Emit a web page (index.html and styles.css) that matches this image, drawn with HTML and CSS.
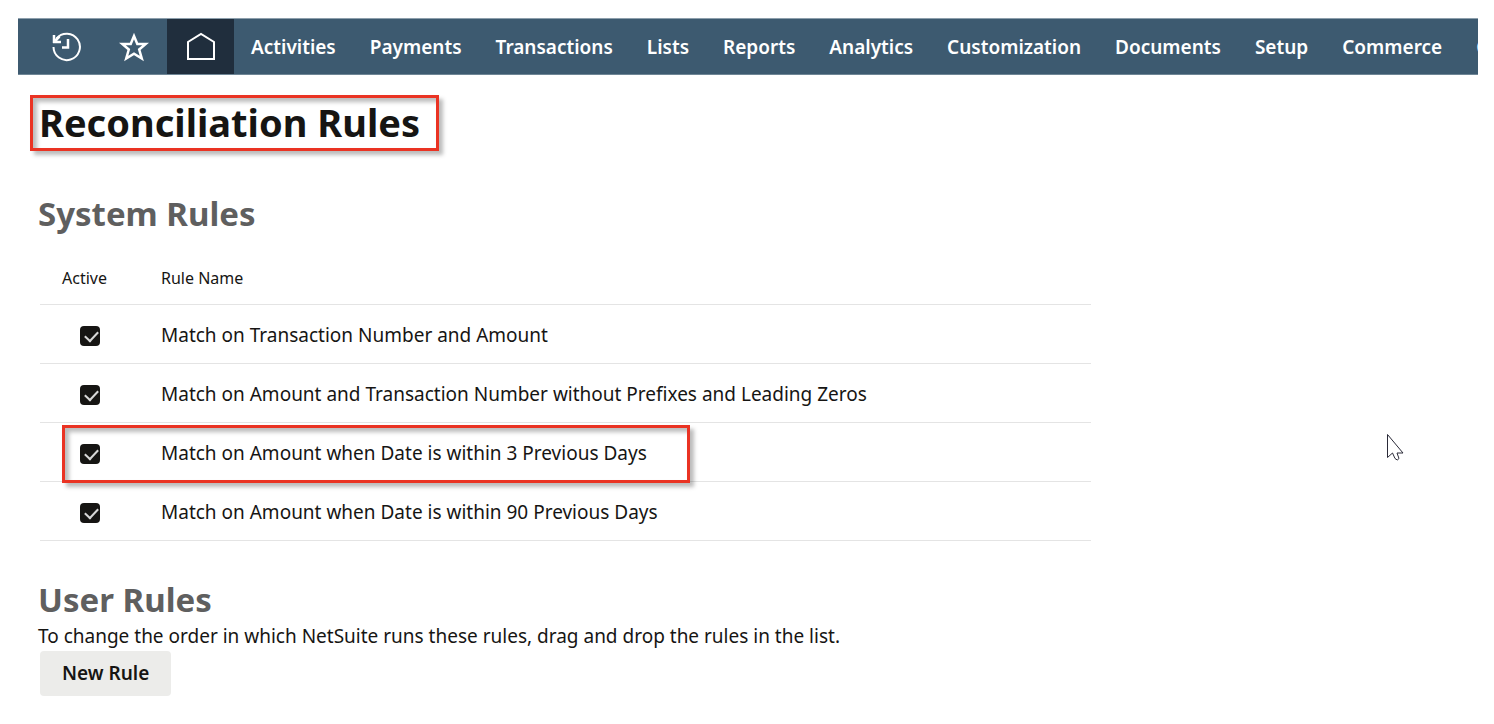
FILE: index.html
```html
<!DOCTYPE html>
<html lang="en">
	<head>
		<meta charset="utf-8">
		<link rel="stylesheet" href="styles.css">
		<title>Reconciliation Rules</title>
	</head>
	<body>
		<nav>
			<a class="icon" href="#" aria-label="Recent Records">
				<svg viewBox="0 0 30 30" width="30" height="30"><path d="M1.500 15a13.200 13.200 0 1 0 3-8.500"/><path d="M2 3v8M1 10h8M2.500 9.500l5-5M16 7v8.500h-6" stroke-width="2.500"/></svg>
			</a>
			<a class="icon" href="#" aria-label="Shortcuts">
				<svg viewBox="0 0 30 30" width="30" height="30"><path d="M15 4l3.300 8h8.400l-6.500 5.500 2.600 9-7.800-4.700-7.800 4.700 2.600-9L3.300 12h8.400z" stroke-width="2.500"/></svg>
			</a>
			<a class="icon current" href="#" aria-label="Home">
				<svg viewBox="0 0 30 30" width="30" height="30"><path d="M2 27V10L15 2l13 8v17z"/></svg>
			</a>
			<a href="#">Activities</a>
			<a href="#">Payments</a>
			<a href="#">Transactions</a>
			<a href="#">Lists</a>
			<a href="#">Reports</a>
			<a href="#">Analytics</a>
			<a href="#">Customization</a>
			<a href="#">Documents</a>
			<a href="#">Setup</a>
			<a href="#">Commerce</a>
			<a href="#">C</a>
		</nav>
		<main>
			<h1 class="marked">Reconciliation Rules</h1>
			<section>
				<h2>System Rules</h2>
				<table>
					<thead>
						<tr>
							<th class="active">Active</th>
							<th>Rule Name</th>
						</tr>
					</thead>
					<tbody>
						<tr>
							<td class="active"><input id="rule_number" type="checkbox" checked></td>
							<td><label for="rule_number">Match on Transaction Number and Amount</label></td>
						</tr>
						<tr>
							<td class="active"><input id="rule_prefix" type="checkbox" checked></td>
							<td><label for="rule_prefix">Match on Amount and Transaction Number without Prefixes and Leading Zeros</label></td>
						</tr>
						<tr class="picked">
							<td class="active"><input id="rule_3_days" type="checkbox" checked></td>
							<td><label for="rule_3_days">Match on Amount when Date is within 3 Previous Days</label><span class="marked"></span></td>
						</tr>
						<tr>
							<td class="active"><input id="rule_90_days" type="checkbox" checked></td>
							<td><label for="rule_90_days">Match on Amount when Date is within 90 Previous Days</label></td>
						</tr>
					</tbody>
				</table>
			</section>
			<section>
				<h2>User Rules</h2>
				<p>To change the order in which NetSuite runs these rules, drag and drop the rules in the list.</p>
				<button type="button">New Rule</button>
			</section>
		</main>
		<svg class="pointer" viewBox="0 0 18 28" width="18" height="28"><path d="M1.500 1.500v23l5-4.500 2.500 5.500q2.500 3 4 0l-2-5.500h6z"/></svg>
	</body>
</html>
```

FILE: styles.css
```css
*{ box-sizing: border-box; }
body{ margin: 18px 16px 0 18px; background: #fff; color: #161513; font: 19px/24px "Noto Sans", "Open Sans", sans-serif; }

nav{ display: flex; height: 57px; padding-left: 15px; overflow: hidden; background: #3d5a70; border-top: 1px solid #8d9fac; border-bottom: 1px solid #6f8696; }
nav a{ display: flex; flex: none; align-items: center; padding: 0 17px; color: #fff; font-weight: 600; text-decoration: none; }
nav .icon{ width: 67px; padding: 0; justify-content: center; }
nav .icon.current{ background: #202e3d; }
nav svg{ fill: none; stroke: #fff; stroke-width: 2; }

main{ padding: 20px; }
h1{ width: fit-content; height: 56px; margin: 0 0 39px -8px; padding: 0 16px 0 6px; font-size: 38px; font-weight: 700; line-height: 48px; }
h2{ margin: 0; color: #5f5f5f; font-size: 33px; font-weight: 700; line-height: 48px; }
.marked{ border: 3px solid #ea3323; box-shadow: 4px 4px 4px #0004, inset 4px 4px 4px #0004; }

section{ margin-bottom: 35px; }
table{ width: 74%; margin: 14px 2px 0; border-collapse: collapse; }
th, td{ padding: 0; text-align: left; border-bottom: 1px solid #e4e4e4; }
th{ height: 52px; font-size: 16px; font-weight: 400; }
td{ height: 59px; padding-top: 2px; }
.active{ width: 121px; padding-left: 22px; }
td.active{ padding-left: 40px; }

input{ display: block; position: relative; appearance: none; width: 20px; height: 20px; margin: 3px 0 0; border-radius: 4px; background: #161513; }
input:checked::after{ content: ""; position: absolute; left: 5px; top: 5px; width: 11px; height: 6px; border: solid #d8d8d8; border-width: 0 0 2px 2px; transform: rotate(-47deg); }

.picked{ position: relative; }
.picked .marked{ position: absolute; left: 22px; top: 3px; width: 628px; height: 58px; pointer-events: none; }

p{ margin: 0 0 3px; }
button{ height: 45px; margin-left: 2px; padding: 0 22px; border: 0; border-radius: 4px; background: #ececea; color: #161513; font: 600 19px/24px "Noto Sans", "Open Sans", sans-serif; }

.pointer{ position: absolute; left: 1386px; top: 433px; fill: #fff; stroke: #2a2a38; stroke-width: 1; }
```
